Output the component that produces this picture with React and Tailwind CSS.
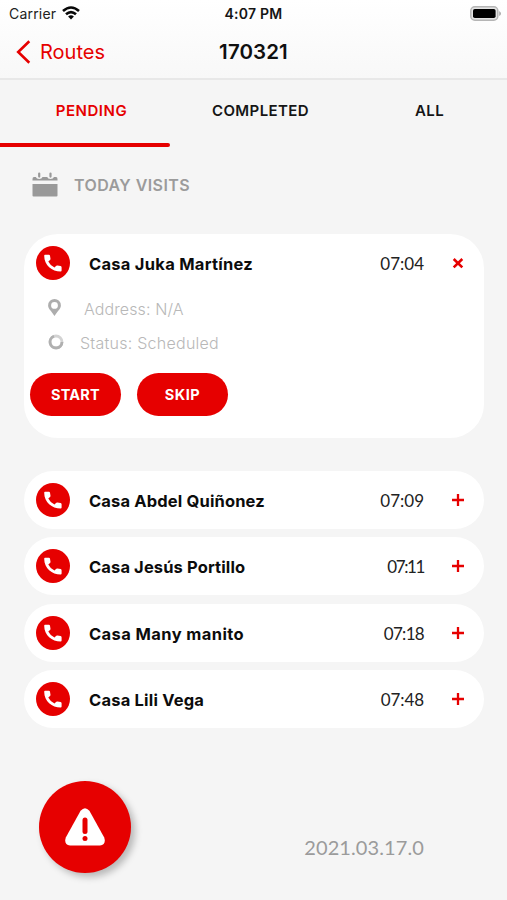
import React from "react";

const visits = [
  { name: "Casa Abdel Quiñonez", time: "07:09", nameSpacing: "tracking-[0.15px]", timeSpacing: "tracking-[0px]" },
  { name: "Casa Jesús Portillo", time: "07:11", nameSpacing: "tracking-[0.12px]", timeSpacing: "tracking-[-1.4px]" },
  { name: "Casa Many manito", time: "07:18", nameSpacing: "tracking-[0.4px]", timeSpacing: "tracking-[-0.7px]" },
  { name: "Casa Lili Vega", time: "07:48", nameSpacing: "tracking-[0.2px]", timeSpacing: "tracking-[-0.1px]" },
];

function PhoneBadge() {
  return (
    <span className="flex size-[34px] shrink-0 items-center justify-center rounded-full bg-[#e60000]">
      <svg viewBox="0 0 18 18" className="size-[18px]" fill="#fff">
        <path d="M1 .8H4.9Q5.9.8 6 1.7L6.5 4.8Q6.6 5.6 6 6.1L4.3 7.5Q6.3 11.7 10.5 13.4L12 11.9Q12.6 11.3 13.4 11.5L16.6 12.1Q17.6 12.3 17.6 13.3V16.6Q17.6 17.6 16.6 17.6C8 17.6.2 11.2.2 1.8Q.2.8 1 .8Z" />
      </svg>
    </span>
  );
}

function VisitHeader({ name, time, nameSpacing, timeSpacing, open }) {
  return (
    <div className="flex items-center">
      <PhoneBadge />
      <span className={`ml-[19px] mt-[2px] flex-1 whitespace-nowrap text-[16.5px] leading-6 font-bold text-[#0c0c0c] ${nameSpacing}`}>{name}</span>
      <span className={`mt-[2px] whitespace-nowrap font-[Lato,sans-serif] text-[17px] leading-6 text-[#222] ${timeSpacing}`}>{time}</span>
      <svg viewBox="0 0 12 12" className="mr-5 ml-[28px] size-3" fill="none" stroke="#e60000">
        {open ? <path d="M1.7 2 10.3 10.4M10.3 2 1.7 10.4" strokeWidth="2.6" /> : <path d="M6 0V12M0 6H12" strokeWidth="2.3" />}
      </svg>
    </div>
  );
}

export default function App() {
  return (
    <div className="flex h-[900px] w-[507px] flex-col overflow-hidden bg-[#f5f5f5] font-[Inter,sans-serif]">
      <header className="h-20 shrink-0 border-b-2 border-[#e8e8e8] bg-linear-to-b from-white to-[#f8f8f8]">
        <div className="grid h-7 grid-cols-3 items-center">
          <div className="flex items-center pl-[9px]">
            <span className="mt-[-1px] text-[14px] tracking-[0.2px] text-[#222]">Carrier</span>
            <svg viewBox="0 0 18 14" className="mt-[-3px] ml-[6px] h-[14px] w-[18px]" fill="none" stroke="#080808" strokeWidth="2.6">
              <path d="M1 5Q9-2 17 5M4 8.3Q9 3.8 14 8.3" />
              <path d="M6.1 10.4Q9 8 11.9 10.4L9 13.4Z" fill="#080808" stroke="none" />
            </svg>
          </div>
          <span className="mt-[-1px] text-center text-[14px] font-semibold tracking-[0.25px] text-[#151515]">4:07 PM</span>
          <svg viewBox="0 0 31 15" className="mt-[-2px] mr-[6px] h-[15px] w-[31px] justify-self-end">
            <rect x=".8" y=".8" width="27" height="13.4" rx="4" fill="#e4e4e4" stroke="#b5b5b5" strokeWidth="1.5" />
            <rect x="3" y="3" width="22.6" height="9" rx="1.8" fill="#000" />
            <path d="M29.2 5Q31 6 31 7.5T29.2 10Z" fill="#aaa" />
          </svg>
        </div>
        <div className="grid h-12 grid-cols-3 items-center">
          <div className="flex items-center pl-4 text-[#e60000]">
            <svg viewBox="0 0 15 24" className="h-6 w-[15px]" fill="none" stroke="currentColor" strokeWidth="2.6">
              <path d="M13.3 1.3 2.2 12 13.3 22.7" />
            </svg>
            <span className="ml-[9px] text-[20px] tracking-[0px]">Routes</span>
          </div>
          <h1 className="text-center text-[20.5px] font-semibold tracking-[0.1px] text-[#101010]">170321</h1>
        </div>
      </header>

      <nav className="h-[66px] shrink-0">
        <div className="ml-[7px] grid h-[63px] w-[507px] grid-cols-3 items-center text-center text-[15px] font-semibold text-[#151515]">
          <span className="tracking-[0.55px] text-[#e60000]">PENDING</span>
          <span className="tracking-[0.4px]">COMPLETED</span>
          <span className="tracking-[0.4px]">ALL</span>
        </div>
        <div className="h-[4px] w-[170px] rounded-r-sm bg-[#e60000]" />
      </nav>

      <main className="pr-[23px] pl-6">
        <div className="flex h-[88px] items-start pt-[26px]">
          <svg viewBox="0 0 26 25" className="ml-2 h-[25px] w-[26px]" fill="#999">
            <path d="M.5 12H25.5V23.5Q25.5 24.5 24.5 24.5H1.5Q.5 24.5.5 23.5Z" />
            <path d="M.5 8.5V7Q.5 5 2 5H3.8Q4.5 7 7.2 7T10.5 5H15.2Q15.8 7 18.5 7T22 5H24Q25.5 5 25.5 7V8.5Z" />
            <path d="M7.2 1.6V4.6M18.5 1.6V4.6" fill="none" stroke="#999" strokeWidth="2.2" strokeLinecap="round" />
          </svg>
          <h2 className="ml-4 text-[16px] leading-[26px] font-semibold tracking-[0.42px] text-[#9b9b9b]">TODAY VISITS</h2>
        </div>

        <section className="h-[204px] rounded-[34px] bg-white pt-3">
          <div className="pl-3">
            <VisitHeader name="Casa Juka Martínez" time="07:04" nameSpacing="tracking-[0.27px]" timeSpacing="tracking-[0px]" open />
          </div>
          <div className="mt-[12px] flex h-[34px] items-center pl-6">
            <svg viewBox="0 0 13 17" className="mt-[-3px] h-[17px] w-[13px]">
              <path fillRule="evenodd" fill="#adadad" d="M6.5 0A6.4 6.4 0 0 0 .1 6.4C.1 10 3.8 12.2 6.5 17C9.2 12.2 12.9 10 12.9 6.4A6.4 6.4 0 0 0 6.5 0ZM6.5 3A3.4 3.4 0 1 1 6.5 9.8A3.4 3.4 0 1 1 6.5 3Z" />
            </svg>
            <span className="ml-[23px] whitespace-nowrap text-[16px] font-light tracking-[0.1px] text-[#b8b8b8]">Address: N/A</span>
          </div>
          <div className="flex h-[34px] items-center pl-6">
            <svg viewBox="0 0 16 16" className="mt-[-2px] size-4" fill="none" strokeWidth="2.8">
              <circle cx="8" cy="8" r="6" stroke="#d3d3d3" />
              <path d="M6 2.3A6 6 0 1 0 14 8" stroke="#b0b0b0" />
            </svg>
            <span className="ml-[16px] whitespace-nowrap text-[16px] font-light tracking-[0.25px] text-[#b8b8b8]">Status: Scheduled</span>
          </div>
          <div className="mt-[13px] flex gap-4 pl-[6px]">
            <button className="h-[43px] w-[91px] rounded-full bg-[#e60000] text-[14.5px] font-bold tracking-[0.2px] text-white">START</button>
            <button className="h-[43px] w-[91px] rounded-full bg-[#e60000] text-[14.5px] font-bold tracking-[0.5px] text-white">SKIP</button>
          </div>
        </section>

        <section className="mt-[33px] flex flex-col gap-[8.4px]">
          {visits.map((visit) => (
            <div key={visit.name} className="flex h-[58px] flex-col justify-center rounded-full bg-white pl-3">
              <VisitHeader {...visit} />
            </div>
          ))}
        </section>
      </main>

      <footer className="mt-[53px] flex items-start justify-between pr-[83px] pl-[39px]">
        <button aria-label="Report a problem" className="flex size-[92px] items-center justify-center rounded-full bg-[#e60000] shadow-[4px_4px_7px_rgba(0,0,0,0.25)]">
          <svg viewBox="0 0 40 38" className="h-[38px] w-10">
            <path d="M15.6 2.8Q20-2.2 24.4 2.8L39.2 29.5Q41.5 36.5 35 37.5H5Q-1.5 36.5.8 29.5Z" fill="#fff" />
            <path d="M20 12V23.5" stroke="#e60000" strokeWidth="5" strokeLinecap="round" />
            <circle cx="20" cy="30.5" r="2.5" fill="#e60000" />
          </svg>
        </button>
        <span className="mt-[52px] whitespace-nowrap font-[Lato,sans-serif] text-[20px] leading-7 tracking-[0.1px] text-[#9b9b9b]">2021.03.17.0</span>
      </footer>
    </div>
  );
}
